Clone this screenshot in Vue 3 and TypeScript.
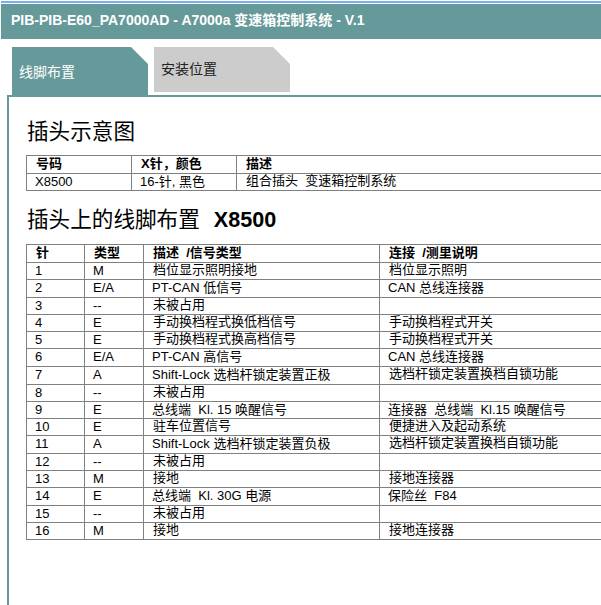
<template>
  <div class="page">
    <div class="top-line"></div>
    <div class="title-bar">PIB-PIB-E60_PA7000AD - A7000a 变速箱控制系统 - V.1</div>

    <div class="tabs">
      <div class="tab active"><span>线脚布置</span></div>
      <div class="tab"><span>安装位置</span></div>
    </div>

    <div class="content">
      <h1 class="first">插头示意图</h1>
      <table class="plug">
        <colgroup>
          <col style="width: 105px" />
          <col style="width: 105px" />
          <col />
        </colgroup>
        <tbody>
          <tr>
            <th>号码</th>
            <th>X针，颜色</th>
            <th>描述</th>
          </tr>
          <tr>
            <td class="latin">X8500</td>
            <td class="latin">16-针, 黑色</td>
            <td class="raised">组合插头&nbsp; 变速箱控制系统</td>
          </tr>
        </tbody>
      </table>

      <h1 class="second">插头上的线脚布置&nbsp; <b>X8500</b></h1>
      <table class="pins">
        <colgroup>
          <col style="width: 58px" />
          <col style="width: 59px" />
          <col style="width: 236px" />
          <col />
        </colgroup>
        <tbody>
          <tr>
            <th>针</th>
            <th>类型</th>
            <th>描述&nbsp; /信号类型</th>
            <th>连接&nbsp; /测里说明</th>
          </tr>
          <tr v-for="pin in pins" :key="pin.no" :class="{ tall: pin.tall }">
            <td class="latin">{{ pin.no }}</td>
            <td class="latin">{{ pin.type }}</td>
            <td :class="cellClass(pin.desc)">{{ pin.desc }}</td>
            <td :class="cellClass(pin.conn)">{{ pin.conn }}</td>
          </tr>
        </tbody>
      </table>
    </div>
  </div>
</template>

<script setup lang="ts">
interface Pin {
  no: number
  type: string
  desc: string
  conn: string
  tall?: boolean
}

const pins: Pin[] = [
  { no: 1, type: 'M', desc: '档位显示照明接地', conn: '档位显示照明' },
  { no: 2, type: 'E/A', desc: 'PT-CAN 低信号', conn: 'CAN 总线连接器', tall: true },
  { no: 3, type: '--', desc: '未被占用', conn: '' },
  { no: 4, type: 'E', desc: '手动换档程式换低档信号', conn: '手动换档程式开关' },
  { no: 5, type: 'E', desc: '手动换档程式换高档信号', conn: '手动换档程式开关' },
  { no: 6, type: 'E/A', desc: 'PT-CAN 高信号', conn: 'CAN 总线连接器', tall: true },
  { no: 7, type: 'A', desc: 'Shift-Lock 选档杆锁定装置正极', conn: '选档杆锁定装置换档自锁功能', tall: true },
  { no: 8, type: '--', desc: '未被占用', conn: '' },
  { no: 9, type: 'E', desc: '总线端  Kl. 15 唤醒信号', conn: '连接器  总线端  Kl.15 唤醒信号' },
  { no: 10, type: 'E', desc: '驻车位置信号', conn: '便捷进入及起动系统' },
  { no: 11, type: 'A', desc: 'Shift-Lock 选档杆锁定装置负极', conn: '选档杆锁定装置换档自锁功能', tall: true },
  { no: 12, type: '--', desc: '未被占用', conn: '' },
  { no: 13, type: 'M', desc: '接地', conn: '接地连接器' },
  { no: 14, type: 'E', desc: '总线端  Kl. 30G 电源', conn: '保险丝  F84', tall: true },
  { no: 15, type: '--', desc: '未被占用', conn: '' },
  { no: 16, type: 'M', desc: '接地', conn: '接地连接器' }
]

// 纯中文单元格的文字位置比较靠上
const cellClass = (text: string) => (/[A-Za-z0-9]/.test(text) ? 'latin' : 'raised')
</script>

<style>
html,
body {
  margin: 0;
  background: #fff;
  overflow: hidden;
}
</style>

<style scoped>
.page {
  width: 601px;
  height: 605px;
  overflow: hidden;
  display: flex;
  flex-direction: column;
  font-family: "Liberation Sans", "Noto Sans CJK SC", sans-serif;
  color: #000;
}

.top-line {
  height: 2px;
  margin: 1px 0 0 1px;
  background: #7ab0f0;
  flex: none;
}

.title-bar {
  flex: none;
  height: 35px;
  margin: 1px 0 0 1px;
  padding-left: 10px;
  line-height: 33px;
  background: #669999;
  color: #fff;
  font-size: 14px;
  font-weight: 700;
  white-space: nowrap;
}

.tabs {
  flex: none;
  display: flex;
  gap: 6px;
  height: 48px;
  margin-top: 8px;
  padding-left: 12px;
}

.tab {
  width: 136px;
  height: 45px;
  padding: 13px 0 0 7px;
  box-sizing: border-box;
  background: #cccccc;
  color: #222;
  font-size: 14px;
  line-height: 18px;
  clip-path: polygon(0 0, 119px 0, 100% 17px, 100% 100%, 0 100%);
}

.tab.active {
  height: 48px;
  padding-top: 16px;
  background: #669999;
  color: #fff;
}

.content {
  flex: 1;
  min-height: 0;
  margin-left: 7px;
  border-top: 2px solid #669999;
  border-left: 2px solid #669999;
  padding-left: 17px;
}

h1 {
  margin: 0;
  padding-left: 1px;
  font-size: 21.6px;
  font-weight: 400;
  line-height: 26px;
  white-space: nowrap;
}

h1 b {
  margin-left: 2px;
  font-weight: 700;
}

.first {
  padding-top: 22px;
  height: 58px;
  box-sizing: border-box;
}

.second {
  height: 37px;
  padding-top: 16px;
  box-sizing: content-box;
}

table {
  border-collapse: collapse;
  table-layout: fixed;
  width: 640px;
  font-size: 13px;
}

th,
td {
  border: 1px solid #808080;
  padding: 0 0 0 9px;
  height: 17px;
  line-height: 16px;
  text-align: left;
  vertical-align: top;
  box-sizing: border-box;
  white-space: pre;
  overflow: hidden;
}

th {
  height: 18px;
  font-weight: 700;
}

tr.tall td {
  height: 18px;
}

td.latin {
  padding-left: 8px;
}

td.raised {
  line-height: 13px;
}
</style>
